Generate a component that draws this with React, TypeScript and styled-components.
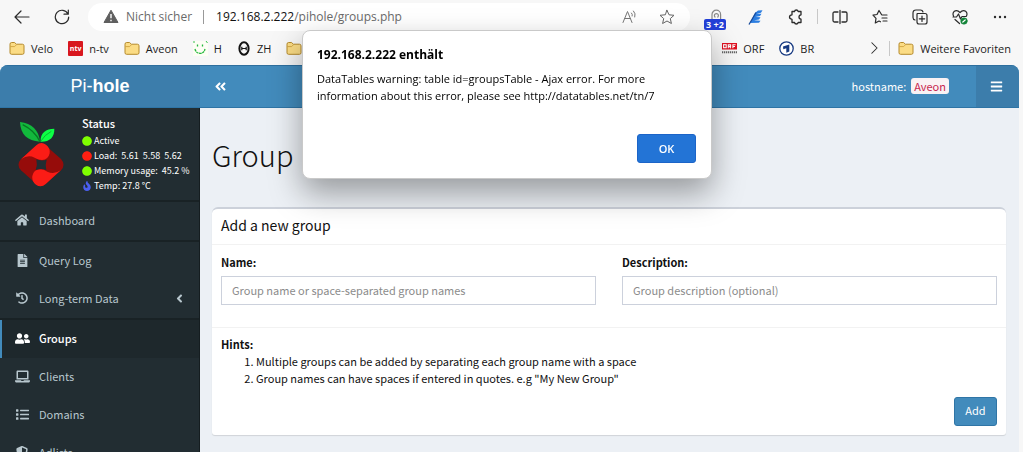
import React from "react";
import styled, { createGlobalStyle, css } from "styled-components";
import {
  FaAngleDoubleLeft,
  FaAngleLeft,
  FaBars,
  FaCircle,
  FaFileAlt,
  FaFire,
  FaHistory,
  FaHome,
  FaLaptop,
  FaList,
  FaShieldAlt,
  FaUserFriends,
} from "react-icons/fa";

const uiFont = `"Open Sans", "Noto Sans", sans-serif`;
const pageFont = `"Noto Sans CJK SC", "Open Sans", sans-serif`;

const GlobalStyle = createGlobalStyle`
  *, *::before, *::after { box-sizing: border-box; }
  body { margin: 0; background: #f7f7f7; font-family: ${pageFont}; font-size: 11px; color: #111; }
  button, input { font: inherit; }
  button { cursor: pointer; }
  h1, h2, h3, p, ol, ul { margin: 0; padding: 0; font-weight: 400; }
  a { color: inherit; text-decoration: none; }
  svg { display: block; flex: none; }
`;

const Window = styled.div`
  display: flex;
  flex-direction: column;
  height: 100vh;
  overflow: hidden;
`;

/* ---------- browser chrome ---------- */

const Toolbar = styled.header`
  display: flex;
  align-items: center;
  height: 33px;
  flex: none;
  font-family: ${uiFont};
`;

const NavButtons = styled.div`
  display: flex;
  gap: 24px;
  padding: 0 18px 0 14px;
`;

const IconButton = styled.button`
  display: flex;
  align-items: center;
  justify-content: center;
  flex: none;
  width: 16px;
  height: 24px;
  padding: 0;
  border: 0;
  background: none;
  color: #2b2b2b;
`;

const AddressBar = styled.div`
  display: flex;
  align-items: center;
  flex: 1;
  height: 28px;
  padding: 0 15px;
  border-radius: 14px;
  background: #fff;
  color: #6a6a6a;
`;

const Security = styled.span`
  padding: 0 11px 0 7px;
  border-right: 1px solid #999;
  font-size: 12px;
  line-height: 14px;
`;

const Url = styled.span`
  flex: 1;
  padding-left: 12px;
  font-size: 12px;
  color: #6a6a6a;

  b {
    font-weight: 400;
    color: #111;
  }
`;

const AddressActions = styled.div`
  display: flex;
  gap: 21px;
`;

const Extensions = styled.div`
  display: flex;
  align-items: center;
  gap: 24px;
  padding: 0 15px 0 18px;
`;

const BadgeHolder = styled.div`
  position: relative;
  width: 16px;
`;

const Badge = styled.span`
  position: absolute;
  top: 10px;
  left: -4px;
  width: 22px;
  border-radius: 2px;
  background: #2340d8;
  color: #fff;
  font-size: 9px;
  font-weight: 700;
  line-height: 11px;
  text-align: center;
  white-space: nowrap;
`;

const Rule = styled.span`
  width: 1px;
  height: 15px;
  background: #c8c8c8;

  ${Extensions} > & {
    margin: 0 -10px 0 -11px;
  }
`;

const Bookmarks = styled.nav`
  display: flex;
  align-items: center;
  height: 32px;
  flex: none;
  padding: 0 12px 2px 9px;
  font-family: ${uiFont};
  color: #1c1c1c;

  > ${Rule} {
    margin: 0 8px 0 7px;
  }
`;

const Bookmark = styled.a<{ $gap?: number }>`
  display: flex;
  align-items: center;
  gap: 6px;
  margin-right: ${(p) => p.$gap ?? 15}px;
  white-space: nowrap;
`;

const Spacer = styled.span`
  flex: 1;
`;

const Tile = styled.span`
  width: 15px;
  border-radius: 1px;
  background: #d8171e;
  color: #fff;
  font-size: 7px;
  font-weight: 700;
  line-height: 15px;
  text-align: center;
`;

/* ---------- Pi-hole page ---------- */

const Page = styled.div`
  display: flex;
  flex-direction: column;
  flex: 1;
  min-height: 0;
  margin-right: 4px;
  border-radius: 8px 8px 0 0;
  overflow: hidden;
  background: #ecf0f5;
`;

const TopBar = styled.div`
  display: flex;
  flex: none;
  height: 43px;
  border-top: 1px solid #2e6f9e;
  border-bottom: 1px solid #2e74a5;
  background: #428bbc;
  color: #fff;
`;

const Brand = styled.a`
  display: flex;
  align-items: center;
  justify-content: center;
  width: 200px;
  background: #3c7dab;
  font-family: "Liberation Sans", Arial, sans-serif;
  font-size: 18px;
`;

const BarButton = styled.button<{ $active?: boolean }>`
  display: flex;
  align-items: center;
  justify-content: center;
  width: 43px;
  border: 0;
  padding: 0 2px 0 0;
  background: ${(p) => (p.$active ? "#3c7dab" : "none")};
  color: #fff;
`;

const Host = styled.div`
  display: flex;
  align-items: center;
  gap: 5px;
  margin-left: auto;
  padding: 0 27px 2px 0;

  code {
    padding: 0 3px;
    border-radius: 3px;
    background: #f9f2f4;
    color: #c7254e;
    font-family: inherit;
    line-height: 16px;
  }
`;

const Columns = styled.div`
  display: flex;
  flex: 1;
  min-height: 0;
`;

const Sidebar = styled.aside`
  width: 200px;
  flex: none;
  overflow: hidden;
  border-right: 1px solid #151d20;
  background: #222d32;
  color: #fff;
`;

const StatusPanel = styled.section`
  display: flex;
  gap: 18px;
  height: 94px;
  padding: 7px 0 0 18px;
  border-bottom: 2px solid #192225;
`;

const StatusText = styled.div`
  font-size: 9px;

  h2 {
    margin-bottom: 2px;
    font-size: 11px;
    font-weight: 500;
    line-height: 16px;
  }
`;

const StatusLine = styled.p`
  display: flex;
  align-items: center;
  gap: 2px;
  line-height: 15px;
  white-space: pre;
`;

const MenuGroup = styled.ul<{ $last?: boolean }>`
  list-style: none;
  ${(p) =>
    !p.$last &&
    css`
      border-bottom: 2px solid #192225;
    `}
`;

const MenuLink = styled.a<{ $active?: boolean }>`
  display: flex;
  align-items: center;
  gap: 9px;
  height: 38px;
  padding: 0 13px 2px 12px;
  border-left: 2px solid ${(p) => (p.$active ? "#428bbc" : "transparent")};
  background: ${(p) => (p.$active ? "#1e282c" : "none")};
  color: ${(p) => (p.$active ? "#fff" : "#b8c7ce")};
  font-weight: ${(p) => (p.$active ? 500 : 400)};

  > svg:last-child {
    margin-left: auto;
  }
`;

const MenuIcon = styled.span`
  display: flex;
  justify-content: center;
  width: 16px;
`;

const Main = styled.main`
  flex: 1;
  min-width: 0;
  padding: 24px 13px 0 12px;
`;

const Title = styled.h1`
  margin-bottom: 31px;
  font-size: 29px;
  font-weight: 300;
  line-height: 44px;
`;

const Card = styled.form`
  display: block;
  border-top: 2px solid #ccd1da;
  border-radius: 6px 6px 3px 3px;
  background: #fff;
  box-shadow: 0 1px 1px rgba(0, 0, 0, 0.12);
`;

const CardHeader = styled.h3`
  padding: 0 9px 2px;
  border-bottom: 1px solid #f2f2f2;
  font-size: 14px;
  line-height: 33px;
`;

const CardBody = styled.div`
  display: grid;
  grid-template-columns: 1fr 1fr;
  gap: 26px;
  padding: 9px 9px 22px;
`;

const Field = styled.label`
  display: flex;
  flex-direction: column;
  gap: 5px;
  font-weight: 700;
  line-height: 17px;

  input {
    width: 100%;
    height: 29px;
    padding: 0 10px 2px;
    border: 1px solid #ccd1dc;
    border-radius: 0;
    background: #fff;
    font-weight: 400;
  }

  input::placeholder {
    color: #8b8b8b;
    opacity: 1;
  }
`;

const CardFooter = styled.div`
  padding: 8px 9px 9px;
  border-top: 1px solid #f2f2f2;
  line-height: 17px;

  ol {
    padding-left: 35px;
  }
`;

const Actions = styled.div`
  display: flex;
  justify-content: flex-end;
  padding-top: 10px;
`;

const AddButton = styled.button`
  width: 43px;
  height: 29px;
  padding: 0 0 2px;
  border: 1px solid #2f75a6;
  border-radius: 3px;
  background: #428bbc;
  color: #fff;
`;

/* ---------- alert ---------- */

const Overlay = styled.div`
  position: fixed;
  inset: 0;
  display: flex;
  align-items: flex-start;
  justify-content: center;
  padding: 30px 9px 0 0;
`;

const Dialog = styled.div`
  width: 410px;
  padding: 15px 15px 15px 14px;
  border: 1px solid #c9c9c9;
  border-radius: 8px;
  background: #fff;
  box-shadow: 0 14px 32px rgba(0, 0, 0, 0.36);
  color: #000;
  font-family: ${uiFont};

  h2 {
    margin-bottom: 7px;
    font-size: 12px;
    font-weight: 700;
    line-height: 17px;
  }

  p {
    margin-bottom: 30px;
    line-height: 17px;
  }
`;

const OkButton = styled.button`
  display: block;
  width: 59px;
  height: 29px;
  margin-left: auto;
  padding: 0 0 1px;
  border: 1px solid #1c64c8;
  border-radius: 3px;
  background: #2374d6;
  color: #fff;
  font-weight: 600;
`;

/* ---------- drawings ---------- */

const Line = ({ size = 16, children, color = "currentColor", width = 1.2 }: {
  size?: number; children: React.ReactNode; color?: string; width?: number;
}) => (
  <svg width={size} height={size} viewBox="0 0 16 16" fill="none" stroke={color}
    strokeWidth={width} strokeLinecap="round" strokeLinejoin="round">{children}</svg>
);

const Folder = () => (
  <svg width="16" height="15" viewBox="0 0 16 15">
    <path d="M1 3.2Q1 1.500 2.600 1.500H5.600L7.300 3.200H13.400Q15 3.200 15 4.800V11.800Q15 13.300 13.400 13.300H2.600Q1 13.300 1 11.800Z" fill="#fbdc85" stroke="#b58a2b" />
    <path d="M1.400 5.600H5.600L7.400 3.800" fill="none" stroke="#c99b36" strokeWidth=".8" />
  </svg>
);

const Smiley = () => (
  <svg width="15" height="15" viewBox="0 0 15 15" fill="none" stroke="#23b83c" strokeWidth="1.3">
    <rect width="15" height="15" fill="#fdfef4" stroke="none" />
    <path d="M4.500 3.500V5.500M9.500 3.500V5.500" />
    <path d="M2 8Q3 12.300 7 12.300T12 8" strokeDasharray="2.500 .6" />
    <path d="M0 1H2M13 0L14.500 2" strokeWidth=".9" />
  </svg>
);

const Theta = () => (
  <svg width="14" height="15" viewBox="0 0 14 15" fill="none" stroke="#111">
    <ellipse cx="7" cy="7.5" rx="4.600" ry="6.300" strokeWidth="2" />
    <path d="M4.500 7.500H9.500M4.800 5.800V9.200M9.200 5.800V9.200" strokeWidth="1.200" />
  </svg>
);

const Orf = () => (
  <svg width="15" height="11" viewBox="0 0 15 11">
    <rect width="15" height="6.5" fill="#e01020" />
    <g fill="none" stroke="#fff" strokeWidth="1.1">
      <rect x="1.600" y="1.700" width="2.600" height="3" />
      <path d="M6.300 5.300V1.700H8.600V3.400H6.300M7.600 3.400L8.800 5.200M10.900 5.300V1.700H13.600M10.900 3.500H13" />
    </g>
    <path d="M0 9.300H15" stroke="#666" strokeWidth="2" strokeDasharray="1.3 .7" />
  </svg>
);

const Ard = () => (
  <svg width="15" height="15" viewBox="0 0 15 15">
    <circle cx="7.500" cy="7.500" r="6.700" fill="#fff" stroke="#173a82" strokeWidth="1.300" />
    <path d="M4 5.400L10.300 3.600V10.600L7.300 11.800V7.200L4.300 8.200Z" fill="#173a82" />
  </svg>
);

const petal = "M28 135L73 94Q87 81 102 92Q115 102 113 118Q109 137 90 138Q78 138 68 131Q48 121 28 135Z";

const PiholeLogo = () => (
  <svg width="46" height="72" viewBox="18 3 138 216">
    <path d="M84 83C45 80 26 62 24 24C60 28 80 48 84 83Z" fill="#12b83c" />
    <path d="M84 83C72 58 52 42 32 32" fill="none" stroke="#057a22" strokeWidth="4" />
    <path d="M86 83C84 56 102 44 127 44C128 70 112 84 86 83Z" fill="#0cff45" />
    <path d="M86 82Q98 62 118 52" fill="none" stroke="#08b932" strokeWidth="3" />
    <path d="M72 95Q87 82 102 95L147 135Q162 152 147 169L102 209Q87 222 72 209L27 169Q12 152 27 135Z" fill="#960c0a" />
    <path d={petal} fill="#fb1c16" />
    <path d={petal} fill="#fb1c16" transform="rotate(180 87 152)" />
    <path d="M73 136Q88 142 104 137Q99 152 103 168Q88 162 71 168Q77 152 73 136Z" fill="#222d32" />
  </svg>
);

const App = () => (
  <Window>
    <GlobalStyle />
    <Toolbar>
      <NavButtons>
        <IconButton aria-label="Zurück"><Line><path d="M15 8H1.500M7 2L1 8L7 14" /></Line></IconButton>
        <IconButton aria-label="Neu laden"><Line><path d="M14 5A6.700 6.700 0 1 0 14.700 8M14.300 1V5.200H10" /></Line></IconButton>
      </NavButtons>
      <AddressBar>
        <svg width="16" height="15" viewBox="0 0 16 15">
          <path d="M8 1.200L15 13.500H1Z" fill="#5f5f5f" stroke="#5f5f5f" strokeLinejoin="round" />
          <path d="M8 5V9.300M8 10.700V12.200" stroke="#fff" strokeWidth="1.400" />
        </svg>
        <Security>Nicht sicher</Security>
        <Url><b>192.168.2.222</b>/pihole/groups.php</Url>
        <AddressActions>
          <IconButton aria-label="Laut vorlesen">
            <Line color="#777" width={1}><path d="M1 13.500L5.500 2.500L10 13.500M2.700 9.500H8.300M9.500 4Q10.800 5.200 10.200 7M11.500 2Q14 4.500 12.800 8" /></Line>
          </IconButton>
          <IconButton aria-label="Favorit hinzufügen">
            <Line color="#666" width={1}><path d="M8 1.300L10 5.800L15 6.300L11.300 9.600L12.400 14.500L8 12L3.600 14.500L4.700 9.600L1 6.300L6 5.800Z" /></Line>
          </IconButton>
        </AddressActions>
      </AddressBar>
      <Extensions>
        <BadgeHolder>
          <Line color="#888" width={1.2}><path d="M4 10V5.500A4.300 4.300 0 0 1 12.600 5.500V10M7 8A2 2 0 1 1 9.800 8" /></Line>
          <Badge>3 +2</Badge>
        </BadgeHolder>
        <svg width="16" height="16" viewBox="0 0 16 16">
          <path d="M2 14L7 4L10 1.500L14.500 1.300L13 3.800L8.500 4.800H13.500L12 7L7.500 8L12.500 8.300L11 10.500L6 11.200L12.500 11.700L11 13.800Z" fill="#2b7de0" />
          <path d="M1 15.500L8 3.500" stroke="#174a9b" strokeWidth="1.300" />
        </svg>
        <IconButton aria-label="Erweiterungen">
          <Line width={1.3}><path d="M4 2.500H6.500Q6.800 1 8.300 1T10.200 2.500H13V5.800Q11 6 11 8T13 10.200V13.500H10.200Q9.800 15 8.300 15T6.500 13.500H4V10.300Q1.500 10 1.500 8T4 5.800Z" /></Line>
        </IconButton>
        <Rule />
        <IconButton aria-label="Geteilter Bildschirm">
          <Line width={1.3}><path d="M6 3H2.500Q1 3 1 4.500V11.500Q1 13 2.500 13H6M10 3H13.500Q15 3 15 4.500V11.500Q15 13 13.500 13H10M8 1.500V14.500" /></Line>
        </IconButton>
        <IconButton aria-label="Favoriten">
          <Line><path d="M9.500 5.500L7 1.500L5 5.500L1 6.200L4 9.400L3.300 14L7 12L8.500 12.800M10 6H15M10 9H15M11 12H15" /></Line>
        </IconButton>
        <IconButton aria-label="Sammlungen">
          <Line><path d="M3 11Q1 10.500 1 8.500V4Q1 1 4 1H8.500Q10.500 1 11 3M5.500 4.500H13Q15 4.500 15 6.500V13Q15 15 13 15H7Q5 15 5 13V5ZM10 7V12.500M7.300 9.800H12.700" /></Line>
        </IconButton>
        <IconButton aria-label="Browser-Essentials">
          <Line>
            <path d="M1.500 7Q.300 4.500 2 2.600Q5 .500 8 3.500Q11 .500 14 2.600Q15.700 4.500 14.500 7M1 8H4.500L6.500 5L8.500 10L10 7.500H14M3 10.500L7.500 14.500" />
            <circle cx="12" cy="12" r="3.300" fill="#14853a" stroke="#14853a" strokeWidth=".5" />
            <path d="M10.800 13L13.200 11" stroke="#fff" />
          </Line>
        </IconButton>
        <IconButton aria-label="Einstellungen">
          <svg width="14" height="4" viewBox="0 0 14 4" fill="#2b2b2b"><circle cx="2" cy="2" r="1.200" /><circle cx="7" cy="2" r="1.200" /><circle cx="12" cy="2" r="1.200" /></svg>
        </IconButton>
      </Extensions>
    </Toolbar>
    <Bookmarks>
      <Bookmark href="#velo"><Folder />Velo</Bookmark>
      <Bookmark href="#ntv"><Tile>ntv</Tile>n-tv</Bookmark>
      <Bookmark href="#aveon"><Folder />Aveon</Bookmark>
      <Bookmark href="#h"><Smiley />H</Bookmark>
      <Bookmark href="#zh"><Theta />ZH</Bookmark>
      <Bookmark href="#more" aria-label="Ordner"><Folder /></Bookmark>
      <Spacer />
      <Bookmark href="#orf"><Orf />ORF</Bookmark>
      <Bookmark href="#br" $gap={52}><Ard />BR</Bookmark>
      <IconButton aria-label="Weitere Lesezeichen"><Line size={14}><path d="M5.500 2L11.500 8L5.500 14" /></Line></IconButton>
      <Rule />
      <Bookmark href="#favoriten" $gap={0}><Folder />Weitere Favoriten</Bookmark>
    </Bookmarks>

    <Page>
      <TopBar>
        <Brand href="#home">Pi-<b>hole</b></Brand>
        <BarButton aria-label="Menü umschalten"><FaAngleDoubleLeft size={13} /></BarButton>
        <Host>hostname: <code>Aveon</code></Host>
        <BarButton aria-label="Menü" $active><FaBars size={13} /></BarButton>
      </TopBar>
      <Columns>
        <Sidebar>
          <StatusPanel>
            <PiholeLogo />
            <StatusText>
              <h2>Status</h2>
              <StatusLine><FaCircle size={10} color="#7fff00" />Active</StatusLine>
              <StatusLine><FaCircle size={10} color="#ff1f12" />{"Load:  5.61  5.58  5.62"}</StatusLine>
              <StatusLine><FaCircle size={10} color="#7fff00" />{"Memory usage:  45.2 %"}</StatusLine>
              <StatusLine><FaFire size={10} color="#4b5ff0" />Temp: 27.8 °C</StatusLine>
            </StatusText>
          </StatusPanel>
          <nav>
            <MenuGroup>
              <li><MenuLink href="#dashboard"><MenuIcon><FaHome size={14} /></MenuIcon>Dashboard</MenuLink></li>
            </MenuGroup>
            <MenuGroup>
              <li><MenuLink href="#query-log"><MenuIcon><FaFileAlt size={13} /></MenuIcon>Query Log</MenuLink></li>
              <li><MenuLink href="#long-term"><MenuIcon><FaHistory size={12} /></MenuIcon>Long-term Data<FaAngleLeft size={13} /></MenuLink></li>
            </MenuGroup>
            <MenuGroup $last>
              <li><MenuLink href="#groups" $active><MenuIcon><FaUserFriends size={15} /></MenuIcon>Groups</MenuLink></li>
              <li><MenuLink href="#clients"><MenuIcon><FaLaptop size={15} /></MenuIcon>Clients</MenuLink></li>
              <li><MenuLink href="#domains"><MenuIcon><FaList size={13} /></MenuIcon>Domains</MenuLink></li>
              <li><MenuLink href="#adlists"><MenuIcon><FaShieldAlt size={12} /></MenuIcon>Adlists</MenuLink></li>
            </MenuGroup>
          </nav>
        </Sidebar>
        <Main>
          <Title>Group</Title>
          <Card onSubmit={(e) => e.preventDefault()}>
            <CardHeader>Add a new group</CardHeader>
            <CardBody>
              <Field>Name:<input type="text" placeholder="Group name or space-separated group names" /></Field>
              <Field>Description:<input type="text" placeholder="Group description (optional)" /></Field>
            </CardBody>
            <CardFooter>
              <b>Hints:</b>
              <ol>
                <li>Multiple groups can be added by separating each group name with a space</li>
                <li>Group names can have spaces if entered in quotes. e.g "My New Group"</li>
              </ol>
              <Actions><AddButton type="submit">Add</AddButton></Actions>
            </CardFooter>
          </Card>
        </Main>
      </Columns>
    </Page>

    <Overlay>
      <Dialog role="alertdialog" aria-labelledby="alert-title" aria-describedby="alert-text">
        <h2 id="alert-title">192.168.2.222 enthält</h2>
        <p id="alert-text">DataTables warning: table id=groupsTable - Ajax error. For more information about this error, please see http://datatables.net/tn/7</p>
        <OkButton type="button">OK</OkButton>
      </Dialog>
    </Overlay>
  </Window>
);

export default App;
